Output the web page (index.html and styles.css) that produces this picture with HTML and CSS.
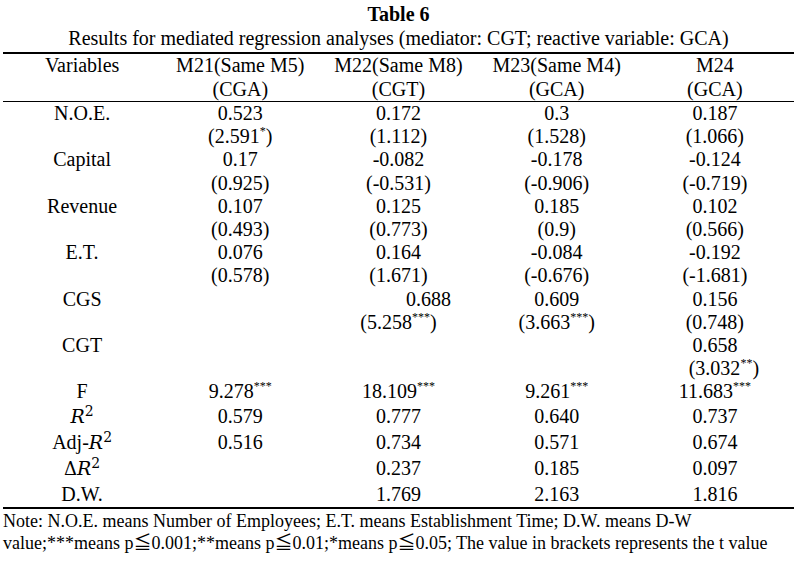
FILE: index.html
```html
<!DOCTYPE html>
<html lang="en">
<head>
<meta charset="utf-8">
<title>Table 6</title>
<link rel="stylesheet" href="styles.css">
</head>
<body>
<div class="page">
  <h1 class="title">Table 6</h1>
  <p class="subtitle">Results for mediated regression analyses (mediator: CGT; reactive variable: GCA)</p>
  <table class="reg">
    <colgroup><col><col><col><col><col></colgroup>
    <thead>
      <tr><th>Variables</th><th>M21(Same M5)</th><th>M22(Same M8)</th><th>M23(Same M4)</th><th>M24</th></tr>
      <tr><th></th><th>(CGA)</th><th>(CGT)</th><th>(GCA)</th><th>(GCA)</th></tr>
    </thead>
    <tbody>
      <tr><td>N.O.E.</td><td>0.523</td><td>0.172</td><td>0.3</td><td>0.187</td></tr>
      <tr><td></td><td>(2.591<sup>*</sup>)</td><td>(1.112)</td><td>(1.528)</td><td>(1.066)</td></tr>
      <tr><td>Capital</td><td>0.17</td><td>-0.082</td><td>-0.178</td><td>-0.124</td></tr>
      <tr><td></td><td>(0.925)</td><td>(-0.531)</td><td>(-0.906)</td><td>(-0.719)</td></tr>
      <tr><td>Revenue</td><td>0.107</td><td>0.125</td><td>0.185</td><td>0.102</td></tr>
      <tr><td></td><td>(0.493)</td><td>(0.773)</td><td>(0.9)</td><td>(0.566)</td></tr>
      <tr><td>E.T.</td><td>0.076</td><td>0.164</td><td>-0.084</td><td>-0.192</td></tr>
      <tr><td></td><td>(0.578)</td><td>(1.671)</td><td>(-0.676)</td><td>(-1.681)</td></tr>
      <tr><td>CGS</td><td></td><td class="shift-lg">0.688</td><td>0.609</td><td>0.156</td></tr>
      <tr><td></td><td></td><td>(5.258<sup>***</sup>)</td><td>(3.663<sup>***</sup>)</td><td>(0.748)</td></tr>
      <tr><td>CGT</td><td></td><td></td><td></td><td>0.658</td></tr>
      <tr><td></td><td></td><td></td><td></td><td class="shift-sm">(3.032<sup>**</sup>)</td></tr>
      <tr><td>F</td><td>9.278<sup>***</sup></td><td>18.109<sup>***</sup></td><td>9.261<sup>***</sup></td><td>11.683<sup>***</sup></td></tr>
      <tr class="math"><td><i class="mv">R</i><sup class="mp">2</sup></td><td>0.579</td><td>0.777</td><td>0.640</td><td>0.737</td></tr>
      <tr class="math"><td>Adj-<i class="mv">R</i><sup class="mp">2</sup></td><td>0.516</td><td>0.734</td><td>0.571</td><td>0.674</td></tr>
      <tr class="math"><td><span class="mv-up">&Delta;</span><i class="mv">R</i><sup class="mp">2</sup></td><td></td><td>0.237</td><td>0.185</td><td>0.097</td></tr>
      <tr class="math"><td>D.W.</td><td></td><td>1.769</td><td>2.163</td><td>1.816</td></tr>
    </tbody>
  </table>
  <p class="note">Note: N.O.E. means Number of Employees; E.T. means Establishment Time; D.W. means D-W<br>value;***means p&#x2266;0.001;**means p&#x2266;0.01;*means p&#x2266;0.05; The value in brackets represents the t value</p>
</div>
</body>
</html>
```
FILE: styles.css
```css
html, body {
  margin: 0;
  padding: 0;
  background: #ffffff;
}
body {
  font-family: "Liberation Serif", "Times New Roman", "Noto Sans CJK SC", serif;
  color: #000000;
  font-size: 20px;
}
.page {
  width: 800px;
  padding: 3px 0 0 3px;
  box-sizing: border-box;
}
.title {
  margin: 0;
  font-size: 20px;
  font-weight: bold;
  line-height: 22px;
  text-align: center;
  width: 791px;
}
.subtitle {
  margin: 0;
  line-height: 27px;
  text-align: center;
  width: 791px;
}
.reg {
  width: 791px;
  border-collapse: collapse;
  table-layout: fixed;
  border-top: 2px solid #000000;
  border-bottom: 2px solid #000000;
}
.reg thead tr:last-child th {
  border-bottom: 1.5px solid #000000;
}
.reg th,
.reg td {
  padding: 0;
  font-weight: normal;
  text-align: center;
  height: 23.2px;
  line-height: 23px;
  white-space: nowrap;
}
.reg thead th {
  height: 23.5px;
}
.reg tr.math td {
  height: 26px;
}
.reg sup {
  font-size: 12px;
  vertical-align: 0;
  position: relative;
  top: -8px;
  line-height: 0;
}
.reg sup.mp {
  font-family: "DejaVu Serif", serif;
  font-size: 14px;
  top: -7px;
}
.mv {
  font-family: "DejaVu Serif", serif;
  font-style: italic;
  font-size: 19px;
}
.mv-up {
  font-family: "DejaVu Serif", serif;
  font-size: 18px;
}
.shift-lg {
  padding-left: 60px !important;
}
.shift-sm {
  padding-left: 18px !important;
}
.note {
  margin: 0;
  padding-top: 1px;
  font-size: 18px;
  line-height: 22px;
  width: 797px;
  white-space: nowrap;
}
```
